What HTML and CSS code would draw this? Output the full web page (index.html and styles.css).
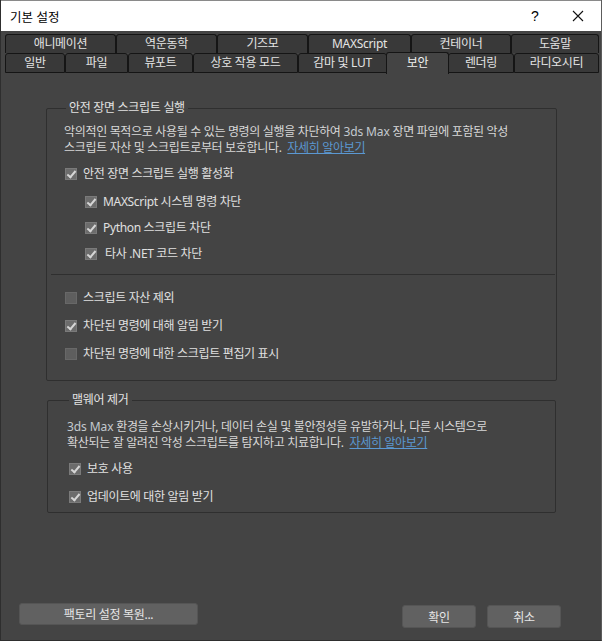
FILE: index.html
```html
<!DOCTYPE html>
<html lang="ko">
<head>
<meta charset="utf-8">
<title>기본 설정</title>
<link rel="stylesheet" href="styles.css">
</head>
<body>
<div class="window">
  <div class="titlebar">
    <span class="title">기본 설정</span>
    <span class="help">?</span>
    <span class="close">
      <svg width="12" height="12" viewBox="0 0 12 12"><path d="M1 1 L11 11 M11 1 L1 11" stroke="#111" stroke-width="1.1" fill="none"/></svg>
    </span>
  </div>

  <div class="tabs">
    <div class="tabrow row1">
      <div class="tab">애니메이션</div>
      <div class="tab">역운동학</div>
      <div class="tab">기즈모</div>
      <div class="tab">MAXScript</div>
      <div class="tab">컨테이너</div>
      <div class="tab">도움말</div>
    </div>
    <div class="tabrow row2">
      <div class="tab">일반</div>
      <div class="tab">파일</div>
      <div class="tab">뷰포트</div>
      <div class="tab">상호 작용 모드</div>
      <div class="tab">감마 및 LUT</div>
      <div class="tab active">보안</div>
      <div class="tab">렌더링</div>
      <div class="tab">라디오시티</div>
    </div>
  </div>

  <div class="panel">
    <fieldset class="group g1">
      <legend>안전 장면 스크립트 실행</legend>
      <p class="desc">악의적인 목적으로 사용될 수 있는 명령의 실행을 차단하여 <span class="prod">3ds Max</span> 장면 파일에 포함된 악성<br>스크립트 자산 및 스크립트로부터 보호합니다. <a class="link" href="#">자세히 알아보기</a></p>

      <div class="opt first"><span class="cb on"></span><span>안전 장면 스크립트 실행 활성화</span></div>
      <div class="opt sub s1"><span class="cb on"></span><span>MAXScript 시스템 명령 차단</span></div>
      <div class="opt sub s2"><span class="cb on"></span><span>Python 스크립트 차단</span></div>
      <div class="opt sub s2"><span class="cb on"></span><span class="sp">타사 .NET 코드 차단</span></div>

      <div class="sep"></div>

      <div class="opt after-sep"><span class="cb"></span><span>스크립트 자산 제외</span></div>
      <div class="opt next"><span class="cb on"></span><span>차단된 명령에 대해 알림 받기</span></div>
      <div class="opt next"><span class="cb"></span><span>차단된 명령에 대한 스크립트 편집기 표시</span></div>
    </fieldset>

    <fieldset class="group g2">
      <legend>맬웨어 제거</legend>
      <p class="desc"><span class="prod">3ds Max</span> 환경을 손상시키거나, 데이터 손실 및 불안정성을 유발하거나, 다른 시스템으로<br>확산되는 잘 알려진 악성 스크립트를 탐지하고 치료합니다. <a class="link" href="#">자세히 알아보기</a></p>
      <div class="opt first ind"><span class="cb on"></span><span>보호 사용</span></div>
      <div class="opt next ind"><span class="cb on"></span><span>업데이트에 대한 알림 받기</span></div>
    </fieldset>
  </div>

  <div class="footer">
    <button class="btn factory">팩토리 설정 복원...</button>
    <div class="right">
      <button class="btn small">확인</button>
      <button class="btn small">취소</button>
    </div>
  </div>
</div>
</body>
</html>
```

FILE: styles.css
```css
* { box-sizing: border-box; }

html, body {
  margin: 0;
  padding: 0;
  background: #444444;
}

body {
  font-family: "Noto Sans", "Noto Sans CJK KR", sans-serif;
  font-size: 12px;
  color: #dcdcdc;
}

.window {
  width: 602px;
  height: 641px;
  display: flex;
  flex-direction: column;
  background: #444444;
  border-left: 1px solid #2e2e2e;
  border-right: 1px solid #5c5c5c;
  border-bottom: 1px solid #2e2e2e;
}

/* title bar */
.titlebar {
  height: 31px;
  flex: none;
  background: #ffffff;
  display: flex;
  align-items: center;
  color: #000;
  border-top: 1px solid #8a8a8a;
}

.title {
  margin-left: 9px;
  font-family: "Noto Sans CJK KR", sans-serif;
  font-size: 12.5px;
  flex: 1;
}

.help {
  width: 20px;
  text-align: center;
  font-family: "Liberation Sans", sans-serif;
  font-size: 14px;
  margin-right: 27px;
}

.close {
  width: 12px;
  height: 12px;
  display: flex;
  margin-right: 17px;
}

/* tabs */
.tabs {
  flex: none;
  padding: 3px 3px 0 4px;
}

.tabrow {
  display: grid;
}

.row1 {
  grid-template-columns: 111px 101px 91px 103px 100px 88px;
  height: 19px;
}

.row2 {
  grid-template-columns: 60px 63px 65px 105px 89px 61px 66px 85px;
  height: 20px;
}

.tab {
  background: #393939;
  border: 1px solid #151515;
  border-bottom: none;
  border-radius: 3px 3px 0 0;
  color: #e4e4e4;
  text-align: center;
  font-size: 12px;
  letter-spacing: -0.3px;
  line-height: 17px;
  white-space: nowrap;
  position: relative;
}

.row2 .tab {
  border-bottom: 1px solid #151515;
  line-height: 17px;
}

.row2 .tab.active {
  background: #444444;
  border-bottom: none;
  margin: -1px -1px -1px -1px;
  z-index: 1;
  line-height: 19px;
  color: #f0f0f0;
}

/* panel */
.panel {
  flex: 1;
  padding: 27px 44px 0 45px;
}

.group {
  margin: 0;
  border: 1px solid #2f2f2f;
  border-radius: 2px;
  padding: 8px 17px 18px 17px;
  min-width: 0;
}

.group legend {
  padding: 0 3px;
  margin-left: 2px;
  line-height: 16px;
  font-size: 12px;
  letter-spacing: -0.3px;
  color: #e2e2e2;
}

.g2 {
  margin: 11px 1px 0 1px;
  padding: 11px 19px 7px 19px;
}

.desc {
  margin: 0;
  line-height: 16px;
  letter-spacing: -0.33px;
  color: #d8d8d8;
  white-space: nowrap;
}

.prod {
  color: #c3c9cf;
  letter-spacing: -0.1px;
}

.link {
  color: #5b98d2;
  text-decoration: underline;
  margin-left: 3px;
}

/* options */
.opt {
  display: flex;
  align-items: center;
  height: 16px;
  line-height: 16px;
  letter-spacing: -0.33px;
  color: #e0e0e0;
  margin-top: 12px;
}

.opt.first { margin-top: 10px; margin-left: 1px; }
.opt.sub { margin-left: 21px; }
.opt.s1 { margin-top: 12px; }
.opt.s2 { margin-top: 10px; }
.opt.after-sep { margin-top: 15px; margin-left: 1px; }
.opt.next { margin-left: 1px; }
.opt.ind { margin-left: 2px; }

.opt .sp { margin-left: 2px; }

.cb {
  width: 12px;
  height: 12px;
  flex: none;
  margin-right: 6px;
  background: #5e5e5e;
  border: 1px solid #686868;
  position: relative;
}

.cb.on {
  background: #6c6c6c;
  border-color: #7a7a7a;
}

.cb.on::after {
  content: "";
  position: absolute;
  left: 3px;
  top: 0px;
  width: 3px;
  height: 7px;
  border-right: 2px solid #d6d6d6;
  border-bottom: 2px solid #d6d6d6;
  transform: rotate(40deg);
}

.sep {
  height: 1px;
  background: #2f2f2f;
  margin: 12px -16px 0 -13px;
}

/* footer */
.footer {
  flex: none;
  height: 40px;
  display: flex;
  justify-content: space-between;
  align-items: flex-start;
  padding: 3px 40px 0 18px;
}

.right {
  display: flex;
  gap: 11px;
  margin-top: 2px;
}

.btn {
  font-family: "Noto Sans", "Noto Sans CJK KR", sans-serif;
  font-size: 12px;
  letter-spacing: -0.3px;
  color: #e6e6e6;
  background: #616161;
  border: 1px solid #555555;
  border-radius: 3px;
  height: 23px;
  padding: 0;
}

.factory { width: 179px; height: 22px; }
.small { width: 74px; }
```
